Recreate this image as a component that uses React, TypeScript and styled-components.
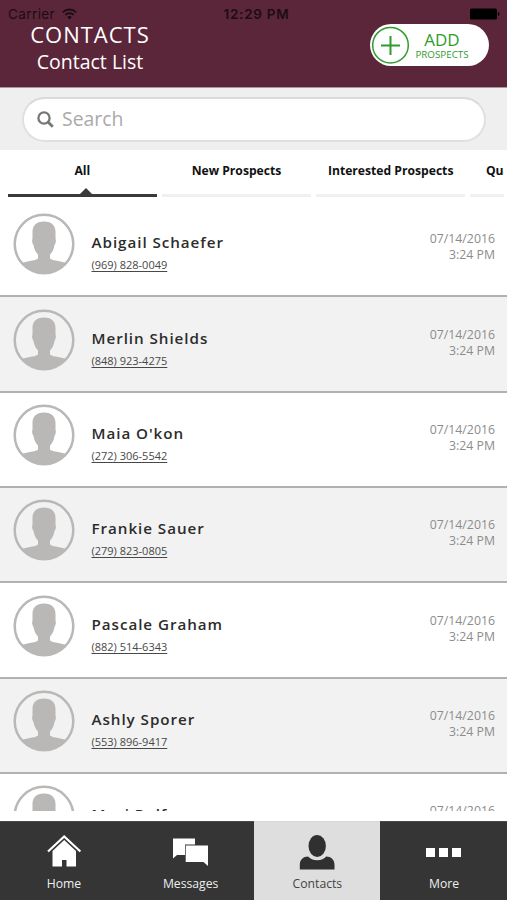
import React from "react";
import styled, { createGlobalStyle } from "styled-components";

const GlobalStyle = createGlobalStyle`
  * { box-sizing: border-box; }
  body { margin: 0; background: #fff; font-family: "Open Sans", "Noto Sans", sans-serif; }
`;

const Screen = styled.div`
  display: flex;
  flex-direction: column;
  width: 507px;
  height: 900px;
  overflow: hidden;
  background: #fff;
`;

const Header = styled.header`
  height: 88px;
  background: #5b2639;
  border-bottom: 1px solid #b094a0;
  flex: none;
`;

const StatusBar = styled.div`
  display: grid;
  grid-template-columns: 1fr auto 1fr;
  align-items: center;
  height: 24px;
  padding: 4px 7px 0 8px;
  font: 400 13.5px/20px Inter, "Liberation Sans", sans-serif;
  color: #1d0c13;
`;

const Carrier = styled.span`
  display: flex;
  align-items: center;
  gap: 7px;
  letter-spacing: 0.4px;
`;

const Clock = styled.span`
  padding-left: 5px;
  font-weight: 600;
  font-size: 13.5px;
  letter-spacing: 0.75px;
`;

const BatterySlot = styled.span`
  display: flex;
  justify-content: flex-end;
`;

const TitleBar = styled.div`
  display: flex;
  justify-content: space-between;
  align-items: flex-start;
  padding: 0 18px 0 30px;
`;

const Titles = styled.div`
  width: 120px;
  display: flex;
  flex-direction: column;
  align-items: center;
  color: #fff;
  white-space: nowrap;
  margin-top: -3px;
`;

const Title = styled.h1`
  margin: 0;
  font-size: 22px;
  font-weight: 400;
  line-height: 27px;
  letter-spacing: 1px;
`;

const Subtitle = styled.h2`
  margin: 0;
  font-size: 19.5px;
  font-weight: 400;
  line-height: 27px;
`;

const AddButton = styled.button`
  display: flex;
  align-items: center;
  width: 119px;
  height: 42px;
  padding: 0 0 0 2px;
  border: 0;
  border-radius: 21px;
  background: #fff;
  color: #309c2e;
  font-family: inherit;
`;

const AddLabel = styled.span`
  display: flex;
  flex-direction: column;
  align-items: center;
  width: 64px;
  padding-top: 1px;
`;

const AddMain = styled.span`
  font-size: 17px;
  line-height: 17px;
`;

const AddSub = styled.span`
  font-size: 9.8px;
  line-height: 13px;
`;

const SearchArea = styled.div`
  flex: none;
  height: 62px;
  padding: 9px 21px 0 22px;
  background: #efefef;
`;

const SearchBox = styled.label`
  display: flex;
  align-items: center;
  gap: 8px;
  height: 45px;
  padding: 0 0 1px 13px;
  border: 2px solid #e0e0e0;
  border-top-color: #dadada;
  border-radius: 23px;
  background: #fff;
`;

const SearchInput = styled.input`
  flex: 1;
  min-width: 0;
  margin-right: 20px;
  padding: 0;
  border: 0;
  outline: 0;
  background: transparent;
  font: 400 19.4px/26px "Open Sans", sans-serif;
  &::placeholder { color: #aaa; opacity: 1; }
`;

const Tabs = styled.nav`
  flex: none;
  height: 52px;
  padding: 0 3px 0 7.5px;
`;

const TabStrip = styled.div`
  display: flex;
  gap: 4.6px;
  overflow: hidden;
`;

const Tab = styled.div<{ $active?: boolean }>`
  position: relative;
  flex: none;
  width: 149.6px;
  height: 47px;
  padding-top: 11px;
  border-bottom: 3px solid ${(p) => (p.$active ? "#3a3a3a" : "#f0f0f0")};
  font-size: 12.15px;
  font-weight: 700;
  line-height: 20px;
  text-align: center;
  white-space: nowrap;
  color: #111;
  &::after {
    content: "";
    display: ${(p) => (p.$active ? "block" : "none")};
    position: absolute;
    left: 72px;
    bottom: 0;
    border: 6px solid transparent;
    border-top: 0;
    border-bottom-color: #3a3a3a;
  }
`;

const List = styled.main`
  flex: none;
  height: 609px;
  overflow: hidden;
`;

const Row = styled.article<{ $shaded: boolean }>`
  display: flex;
  align-items: flex-start;
  height: 95.33px;
  padding: 11.4px 12px 0 12.5px;
  border-bottom: 2px solid #b1b1b1;
  background: ${(p) => (p.$shaded ? "#f2f2f2" : "#fff")};
`;

const Details = styled.div`
  flex: 1;
  padding: 17.8px 0 0 17px;
`;

const Name = styled.div`
  font-size: 15.2px;
  font-weight: 600;
  line-height: 22px;
  letter-spacing: 0.95px;
  color: #2c2c2c;
`;

const Phone = styled.a`
  display: block;
  width: max-content;
  margin-top: 2px;
  font-size: 11px;
  line-height: 20px;
  color: #484848;
  text-decoration: underline;
  text-underline-offset: 1.5px;
`;

const Stamp = styled.time`
  padding-top: 18px;
  font-size: 12.3px;
  line-height: 16px;
  text-align: right;
  color: #8c8c8c;
`;

const TabBar = styled.footer`
  flex: none;
  display: grid;
  grid-template-columns: repeat(4, 1fr);
  height: 79px;
  margin-top: 10px;
  background: #353535;
`;

const NavItem = styled.div<{ $active?: boolean }>`
  display: flex;
  flex-direction: column;
  align-items: center;
  padding: 12px 0 0 1px;
  border-top: 1px solid ${(p) => (p.$active ? "#d8d8d8" : "#4a4a4a")};
  background: ${(p) => (p.$active ? "#dedede" : "#353535")};
  color: ${(p) => (p.$active ? "#444" : "#eee")};
  font-size: 12.2px;
  line-height: 18px;
`;

const NavIcon = styled.svg`
  display: block;
  margin-bottom: 5px;
`;

const Avatar = () => (
  <svg width="62" height="62" viewBox="0 0 62 62">
    <path
      d="M31 8.500C23 8.500 19.500 13 19.500 19v7c-.8.5-.3 4.500 1 6 .6 4 2 7 4.500 9.500v4C21 48.500 13 47.500 8.500 50.500 14 57 22 60.500 31 60.500S48 57 53.500 50.500C49 47.500 41 48.500 37 45.500v-4c2.500-2.500 3.900-5.500 4.500-9.500 1.300-1.500 1.800-5.500 1-6v-7C42.500 13 39 8.500 31 8.500Z"
      fill="#b9b8b6"
    />
    <circle cx="31" cy="31" r="29.300" fill="none" stroke="#b9b8b6" strokeWidth="2.500" />
  </svg>
);

const contacts = [
  ["Abigail Schaefer", "(969) 828-0049"],
  ["Merlin Shields", "(848) 923-4275"],
  ["Maia O'kon", "(272) 306-5542"],
  ["Frankie Sauer", "(279) 823-0805"],
  ["Pascale Graham", "(882) 514-6343"],
  ["Ashly Sporer", "(553) 896-9417"],
  ["Maci Rolfson", "(415) 702-3318"],
];

export default function App() {
  return (
    <Screen>
      <GlobalStyle />
      <Header>
        <StatusBar>
          <Carrier>
            Carrier
            <svg width="15" height="12" viewBox="0 0 15 12" fill="none" stroke="#1d0c13" strokeWidth="1.900">
              <path d="M.8 4.300a9.500 9.500 0 0 1 13.400 0M3.300 6.900a6 6 0 0 1 8.400 0" />
              <path d="M7.500 11.400 5.200 9a3.300 3.300 0 0 1 4.600 0Z" fill="#1d0c13" stroke="none" />
            </svg>
          </Carrier>
          <Clock>12:29 PM</Clock>
          <BatterySlot>
            <svg width="30" height="12" viewBox="0 0 30 12">
              <rect x="0" y="0.500" width="27" height="11" rx="1.500" fill="#000" />
              <path d="M28 4c2 .6 2 3.400 0 4Z" fill="#000" />
            </svg>
          </BatterySlot>
        </StatusBar>
        <TitleBar>
          <Titles>
            <Title>CONTACTS</Title>
            <Subtitle>Contact List</Subtitle>
          </Titles>
          <AddButton>
            <svg width="38" height="38" viewBox="0 0 38 38" fill="none" stroke="#309c2e">
              <circle cx="18.500" cy="19.200" r="17.800" strokeWidth="1.500" />
              <path d="M9 19.500h19M18.500 10v19" strokeWidth="2" />
            </svg>
            <AddLabel>
              <AddMain>ADD</AddMain>
              <AddSub>PROSPECTS</AddSub>
            </AddLabel>
          </AddButton>
        </TitleBar>
      </Header>
      <SearchArea>
        <SearchBox>
          <svg width="17" height="17" viewBox="0 0 17 17" fill="none" stroke="#777" strokeWidth="2.300">
            <circle cx="7" cy="7" r="5.600" />
            <path d="m11 11 4.800 4.800" strokeWidth="2.800" />
          </svg>
          <SearchInput placeholder="Search" />
        </SearchBox>
      </SearchArea>
      <Tabs>
        <TabStrip>
          <Tab $active>All</Tab>
          <Tab>New Prospects</Tab>
          <Tab>Interested Prospects</Tab>
          <Tab>Qualified Prospects</Tab>
        </TabStrip>
      </Tabs>
      <List>
        {contacts.map(([name, phone], i) => (
          <Row key={phone} $shaded={i % 2 === 1}>
            <Avatar />
            <Details>
              <Name>{name}</Name>
              <Phone>{phone}</Phone>
            </Details>
            <Stamp>
              07/14/2016
              <br />
              3:24 PM
            </Stamp>
          </Row>
        ))}
      </List>
      <TabBar>
        <NavItem>
          <NavIcon width="36" height="36" viewBox="0 0 36 36">
            <path d="M2 17.500 18.200 2.500l16.200 15" fill="none" stroke="#fff" strokeWidth="2.200" />
            <path d="M18.200 6 30 17v15.500H20.500V26h-4.500v6.500H6.500V17Z" fill="#fff" />
          </NavIcon>
          Home
        </NavItem>
        <NavItem>
          <NavIcon width="36" height="36" viewBox="0 0 36 36" fill="#fff">
            <path d="M0 4.500h22v6H12v10.500H4l-4 3.500Z" />
            <path d="M12.700 11.500h22.300V32L30.500 28H12.700Z" />
          </NavIcon>
          Messages
        </NavItem>
        <NavItem $active>
          <NavIcon width="36" height="36" viewBox="0 0 36 36" fill="#303030">
            <ellipse cx="18.200" cy="12" rx="8.700" ry="11" />
            <path d="M.8 35.500V31c0-5.500 3.500-8.500 8.300-8.500 2 2.200 5 3.700 9.100 3.700s7-1.500 9-3.700c4.800 0 8.300 3 8.300 8.500v4.500Z" />
          </NavIcon>
          Contacts
        </NavItem>
        <NavItem>
          <NavIcon width="36" height="36" viewBox="0 0 36 36" fill="#fff">
            <path d="M0 14h9v9h-9ZM13 14h9v9h-9ZM26 14h9v9h-9Z" />
          </NavIcon>
          More
        </NavItem>
      </TabBar>
    </Screen>
  );
}
